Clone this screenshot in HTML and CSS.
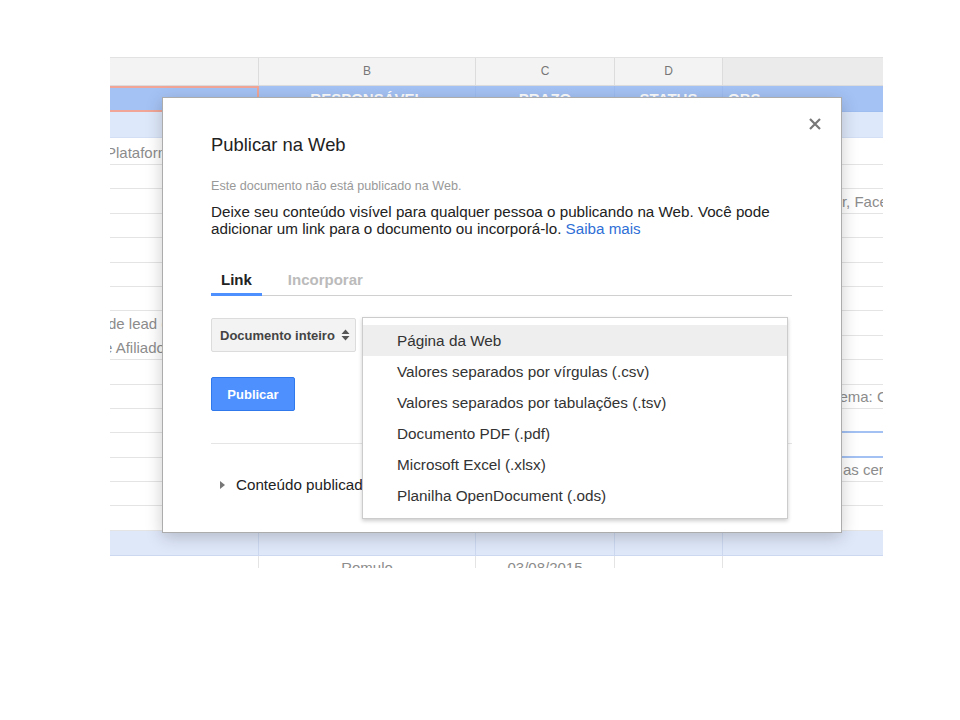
FILE: index.html
```html
<!DOCTYPE html>
<html lang="pt-BR">
<head>
<meta charset="utf-8">
<title>Publicar na Web</title>
<link rel="stylesheet" href="styles.css">
</head>
<body>
<div class="sheet">
  <div class="row hdr"><div class="c"></div><div class="c">B</div><div class="c">C</div><div class="c">D</div><div class="c e"></div></div>
  <div class="row r1"><div class="c a sel"></div><div class="c">RESPONSÁVEL</div><div class="c">PRAZO</div><div class="c">STATUS</div><div class="c e">OBS</div></div>
  <div class="row r2"><div class="c a"></div><div class="c"></div><div class="c"></div><div class="c"></div><div class="c e"></div></div>
  <div class="row r3"><div class="c a"><span class="i4">Plataforma de vendas</span></div><div class="c"></div><div class="c"></div><div class="c"></div><div class="c e"></div></div>
  <div class="row"><div class="c a"></div><div class="c"></div><div class="c"></div><div class="c"></div><div class="c e"></div></div>
  <div class="row"><div class="c a"></div><div class="c"></div><div class="c"></div><div class="c"></div><div class="c e p0">Divulgar no Twitter, Facebook</div></div>
  <div class="row"><div class="c a"></div><div class="c"></div><div class="c"></div><div class="c"></div><div class="c e"></div></div>
  <div class="row"><div class="c a"></div><div class="c"></div><div class="c"></div><div class="c"></div><div class="c e"></div></div>
  <div class="row"><div class="c a"></div><div class="c"></div><div class="c"></div><div class="c"></div><div class="c e"></div></div>
  <div class="row"><div class="c a"></div><div class="c"></div><div class="c"></div><div class="c"></div><div class="c e"></div></div>
  <div class="row"><div class="c a nb"><span class="i1">de lead e cadastro</span></div><div class="c"></div><div class="c"></div><div class="c"></div><div class="c e"></div></div>
  <div class="row"><div class="c a"><span class="i6">e Afiliados</span></div><div class="c"></div><div class="c"></div><div class="c"></div><div class="c e"></div></div>
  <div class="row"><div class="c a"></div><div class="c"></div><div class="c"></div><div class="c"></div><div class="c e"></div></div>
  <div class="row"><div class="c a"></div><div class="c"></div><div class="c"></div><div class="c"></div><div class="c e">Cadastrar no sistema: CRM</div></div>
  <div class="row"><div class="c a"></div><div class="c"></div><div class="c"></div><div class="c"></div><div class="c e bl"></div></div>
  <div class="row"><div class="c a"></div><div class="c"></div><div class="c"></div><div class="c"></div><div class="c e bl"></div></div>
  <div class="row"><div class="c a"></div><div class="c"></div><div class="c"></div><div class="c"></div><div class="c e p9">Organizar todas as certidões</div></div>
  <div class="row"><div class="c a"></div><div class="c"></div><div class="c"></div><div class="c"></div><div class="c e"></div></div>
  <div class="row"><div class="c a"></div><div class="c"></div><div class="c"></div><div class="c"></div><div class="c e"></div></div>
  <div class="row band"><div class="c a"></div><div class="c"></div><div class="c"></div><div class="c"></div><div class="c e"></div></div>
  <div class="row last"><div class="c a"></div><div class="c">Romulo</div><div class="c">03/08/2015</div><div class="c"></div><div class="c e"></div></div>
</div>

<div class="dialog" role="dialog" aria-label="Publicar na Web">
  <button class="close" type="button" aria-label="Fechar">
    <svg width="12" height="12" viewBox="0 0 12 12"><path d="M1 1L11 11M11 1L1 11" stroke="#777" stroke-width="2.2" fill="none"/></svg>
  </button>
  <h1 class="title">Publicar na Web</h1>
  <p class="status">Este documento não está publicado na Web.</p>
  <p class="desc">Deixe seu conteúdo visível para qualquer pessoa o publicando na Web. Você pode adicionar um link para o documento ou incorporá-lo. <a href="#" class="link">Saiba mais</a></p>
  <div class="tabs">
    <div class="tab active">Link</div>
    <div class="tab">Incorporar</div>
  </div>
  <div class="select">
    <span>Documento inteiro</span>
    <svg width="9" height="14" viewBox="0 0 9 14"><path d="M0.5 6L4.5 1.5L8.5 6Z M0.5 8L4.5 12.5L8.5 8Z" fill="#555"/></svg>
  </div>
  <button class="btn-primary" type="button">Publicar</button>
  <div class="sep"></div>
  <div class="disclosure">
    <svg width="5" height="8" viewBox="0 0 5 8"><path d="M0 0L5 4L0 8Z" fill="#777"/></svg>
    <span>Conteúdo publicado e configurações</span>
  </div>
  <ul class="menu">
    <li class="item hover">Página da Web</li>
    <li class="item">Valores separados por vírgulas (.csv)</li>
    <li class="item">Valores separados por tabulações (.tsv)</li>
    <li class="item">Documento PDF (.pdf)</li>
    <li class="item">Microsoft Excel (.xlsx)</li>
    <li class="item">Planilha OpenDocument (.ods)</li>
  </ul>
</div>
</body>
</html>
```
FILE: styles.css
```css
* { box-sizing: border-box; }
html, body { margin: 0; padding: 0; background: #fff; }
body {
  font-family: "Liberation Sans", Arial, sans-serif;
  width: 960px;
  height: 720px;
  overflow: hidden;
  position: relative;
}

/* ---------- spreadsheet behind ---------- */
.sheet {
  margin: 57px 0 0 110px;
  width: 773px;
  height: 511px;
  overflow: hidden;
  border-top: 1px solid #e2e2e2;
}
.row {
  display: grid;
  grid-template-columns: 149px 217px 139px 108px 160px;
  height: 24.4px;
}
.c {
  border-right: 1px solid #e4e4e4;
  border-bottom: 1px solid #e4e4e4;
  display: flex;
  align-items: flex-end;
  padding: 0 3px 3px;
  font-size: 15px;
  line-height: 17px;
  color: #8c8c8c;
  white-space: nowrap;
  min-width: 0;
}
.c.e { border-right: 0; }
.c.a { padding-left: 0; }
.c.nb { border-bottom-color: transparent; }
.c.bl { border-bottom: 2px solid #a3c1f3; }
.c.p0 { padding-left: 0; }
.c.p9 { padding-left: 9px; }
.i1 { margin-left: -2px; }
.i4 { margin-left: -4px; }
.i6 { margin-left: -6px; }

.hdr { height: 28px; }
.hdr .c {
  background: #f3f3f3;
  border-color: #dcdcdc;
  justify-content: center;
  align-items: center;
  padding: 0;
  font-size: 12px;
  color: #777;
}
.hdr .c.e { background: #ebebeb; }

.r1 { height: 26px; }
.r1 .c {
  background: #a4c2f4;
  border-color: #9dbcf0;
  justify-content: center;
  align-items: center;
  padding: 0;
  font-weight: bold;
  color: #fff;
}
.r1 .c.e { justify-content: flex-start; padding-left: 5px; }
.r1 .c.sel { border: 2px solid #f0a596; border-left: 0; }

.r2 { height: 26px; }
.r2 .c { background: #dde8fa; border-color: #d3dff5; }
.r3 { height: 27px; }

.band { height: 25px; }
.band .c { background: #dfe8f9; border-color: #cbd8f0; }
.last { height: 25px; }
.last .c { justify-content: center; align-items: center; padding: 0; }

/* ---------- dialog ---------- */
.dialog {
  position: absolute;
  left: 162px;
  top: 97px;
  width: 680px;
  background: #fff;
  border: 1px solid #acacac;
  box-shadow: 0 4px 16px rgba(0, 0, 0, 0.2);
  padding: 35px 49px 37px 48px;
  color: #222;
}
.close {
  position: absolute;
  top: 20px;
  right: 20px;
  width: 12px;
  height: 12px;
  padding: 0;
  border: 0;
  background: none;
  display: block;
}
.close svg { display: block; }
.title {
  margin: 0;
  font-size: 18.4px;
  line-height: 24px;
  font-weight: normal;
  color: #222;
}
.status {
  margin: 21px 0 0;
  font-size: 12.6px;
  line-height: 16px;
  color: #999;
}
.desc {
  margin: 9px 0 0;
  font-size: 15.2px;
  line-height: 17px;
  color: #222;
}
.link { color: #2f6fd6; text-decoration: none; }

.tabs {
  margin-top: 34px;
  display: flex;
  border-bottom: 1px solid #d0d0d0;
}
.tab {
  font-size: 15px;
  line-height: 18px;
  font-weight: bold;
  color: #bbb;
  padding: 0 10px 4px;
  border-bottom: 3px solid transparent;
  margin-bottom: -1px;
}
.tab + .tab { margin-left: 16px; }
.tab.active { color: #222; border-bottom-color: #4d90fe; }

.select {
  margin-top: 22px;
  width: 145px;
  height: 34px;
  display: flex;
  align-items: center;
  justify-content: space-between;
  padding: 0 5px 0 8px;
  background: #f3f3f3;
  border: 1px solid #dcdcdc;
  border-radius: 2px;
  font-size: 13px;
  font-weight: bold;
  color: #444;
  white-space: nowrap;
}
.select svg { display: block; }

.btn-primary {
  display: block;
  margin-top: 25px;
  width: 84px;
  height: 34px;
  padding: 0;
  background: #4d90fe;
  border: 1px solid #3079ed;
  border-radius: 2px;
  color: #fff;
  font-family: inherit;
  font-size: 13px;
  font-weight: bold;
}

.sep {
  margin-top: 32px;
  border-top: 1px solid #e5e5e5;
}

.disclosure {
  margin-top: 31px;
  display: flex;
  align-items: center;
  padding-left: 9px;
  font-size: 15.2px;
  line-height: 20px;
  color: #222;
  white-space: nowrap;
}
.disclosure svg { display: block; margin-right: 11px; }

.menu {
  position: absolute;
  left: 199px;
  top: 219px;
  width: 426px;
  margin: 0;
  padding: 7px 0;
  list-style: none;
  background: #fff;
  border: 1px solid rgba(0, 0, 0, 0.2);
  box-shadow: 0 2px 4px rgba(0, 0, 0, 0.2);
}
.item {
  height: 31px;
  line-height: 31px;
  padding-left: 34px;
  font-size: 15.3px;
  color: #333;
  white-space: nowrap;
}
.item.hover { background: #eee; }
```
